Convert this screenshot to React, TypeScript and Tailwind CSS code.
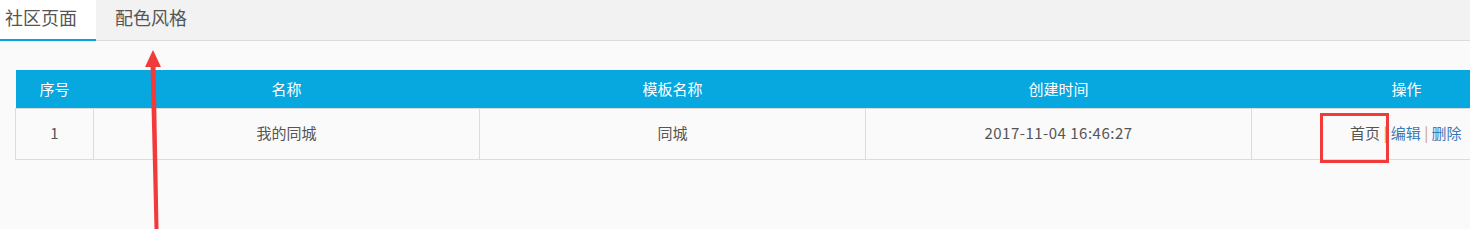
import * as React from 'react';

const columns = [
  { key: 'idx', title: '序号', width: 'w-[78px]' },
  { key: 'name', title: '名称', width: 'w-[386px]' },
  { key: 'tpl', title: '模板名称', width: 'w-[386px]' },
  { key: 'time', title: '创建时间', width: 'w-[386px]' },
  { key: 'op', title: '操作', width: 'w-[310px]' },
];

const rows = [{ idx: 1, name: '我的同城', tpl: '同城', time: '2017-11-04 16:46:27' }];

export default function App() {
  return (
    <div
      className="relative w-[1470px] h-[229px] overflow-hidden bg-[#fafafa] text-[#555]"
      style={{ fontFamily: '"Noto Sans CJK SC", "Noto Sans", sans-serif' }}
    >
      {/* Tabs */}
      <div className="flex h-[41px] bg-[#f2f2f2] border-b border-[#dcdcdc]">
        <div className="w-[96px] h-[41px] -mb-px bg-white border-b-2 border-[#0aa2dd] pl-[5px] text-[18px] leading-[35px]">
          社区页面
        </div>
        <div className="pl-[19px] text-[18px] leading-[35px] text-[#555]">配色风格</div>
      </div>

      {/* Table */}
      <div className="pt-[29px] pl-[15px]">
        <table className="border-collapse table-fixed w-[1546px] text-[15px]">
          <thead>
            <tr className="h-[38px] bg-[#07a7df] text-white">
              {columns.map((c) => (
                <th key={c.key} className={`${c.width} font-normal text-center p-0`}>
                  {c.title}
                </th>
              ))}
            </tr>
          </thead>
          <tbody>
            {rows.map((r) => (
              <tr key={r.idx} className="h-[51px] text-center">
                <td className="border border-[#dcdcdc]">{r.idx}</td>
                <td className="border border-[#dcdcdc]">{r.name}</td>
                <td className="border border-[#dcdcdc]">{r.tpl}</td>
                <td className="border border-[#dcdcdc] tracking-[0.5px]">{r.time}</td>
                <td className="border-y border-l border-[#dcdcdc] text-left pl-[98px]">
                  <span className="text-[#555]">首页</span>
                  <span className="text-[#c8a06a]"> | </span>
                  <span className="text-[#3a78b8]">编辑</span>
                  <span className="text-[#c8a06a]"> | </span>
                  <span className="text-[#3a78b8]">删除</span>
                </td>
              </tr>
            ))}
          </tbody>
        </table>
      </div>

      {/* Annotation: red box */}
      <div className="absolute left-[1320px] top-[113px] w-[69px] h-[50px] border-[3px] border-[#f23a3a]" />

      {/* Annotation: red arrow */}
      <svg className="absolute left-0 top-0 pointer-events-none" width="1470" height="229">
        <polygon points="150.5,64 155.5,64 158.5,229 154.5,229" fill="#f23a3a" />
        <polygon points="153,50 161,67 145,67" fill="#f23a3a" />
      </svg>
    </div>
  );
}
